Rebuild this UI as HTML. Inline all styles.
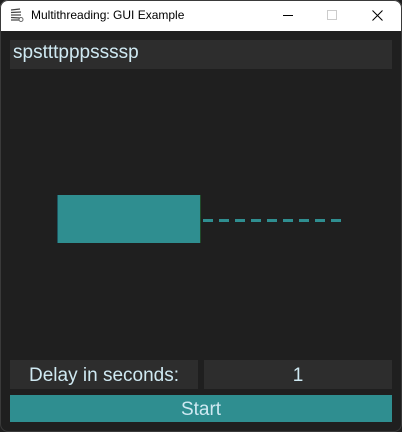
<!DOCTYPE html>
<html><head><style>
*{margin:0;padding:0;box-sizing:border-box}
body{width:402px;height:432px;background:#1f1f1f;position:relative;overflow:hidden;font-family:"Segoe UI","Liberation Sans",sans-serif}
.tb{position:absolute;left:0;top:0;width:402px;height:31px;background:#fff;border-radius:8px 8px 0 0}
.tt{position:absolute;left:31px;top:8px;font-size:12px;color:#000}
.box{position:absolute;background:#2d2d2d;color:#cfe9f2;font-size:19px}
.frame{position:absolute;left:0;top:0;width:402px;height:432px;border:1px solid #3a3a3a;border-radius:8px;pointer-events:none}
</style></head><body>
<div class="tb">
<svg style="position:absolute;left:9px;top:7px" width="16" height="16" viewBox="0 0 16 16"><g stroke="#444" stroke-width="1.2"><line x1="2" y1="3" x2="11" y2="2"/><line x1="2" y1="5.5" x2="12" y2="5"/><line x1="2" y1="8" x2="12" y2="8"/><line x1="2" y1="10.5" x2="11" y2="11"/><line x1="2" y1="13" x2="10" y2="13"/></g><circle cx="12" cy="12.5" r="2" fill="none" stroke="#666"/></svg>
<div class="tt">Multithreading: GUI Example</div>
<div style="position:absolute;left:283px;top:15px;width:10px;height:1px;background:#000"></div>
<div style="position:absolute;left:327px;top:10px;width:10px;height:10px;border:1px solid #ccc"></div>
<svg style="position:absolute;left:372px;top:10px" width="11" height="11"><path d="M0.5 0.5L10.5 10.5M10.5 0.5L0.5 10.5" stroke="#000" stroke-width="1"/></svg>
</div>
<div class="box" style="left:10px;top:40px;width:382px;height:29px;padding:2px 0 0 3px">spstttpppssssp</div>
<div style="position:absolute;left:57px;top:195px;width:144px;height:48px;background:#2f8e90;border-left:1px solid #1d5560;border-right:1px solid #1f4a2a"></div>
<svg style="position:absolute;left:202px;top:218px" width="140" height="5"><line x1="0" y1="2.5" x2="140" y2="2.5" stroke="#2f8e90" stroke-width="3" stroke-dasharray="10 6" stroke-dashoffset="-1"/></svg>
<div class="box" style="left:10px;top:360px;width:188px;height:29px;text-align:center;line-height:31px">Delay in seconds:</div>
<div class="box" style="left:204px;top:360px;width:188px;height:29px;text-align:center;line-height:31px">1</div>
<div class="box" style="left:10px;top:395px;width:382px;height:27px;background:#2f8e90;text-align:center;line-height:29px">Start</div>
<div class="frame"></div>
</body></html>
